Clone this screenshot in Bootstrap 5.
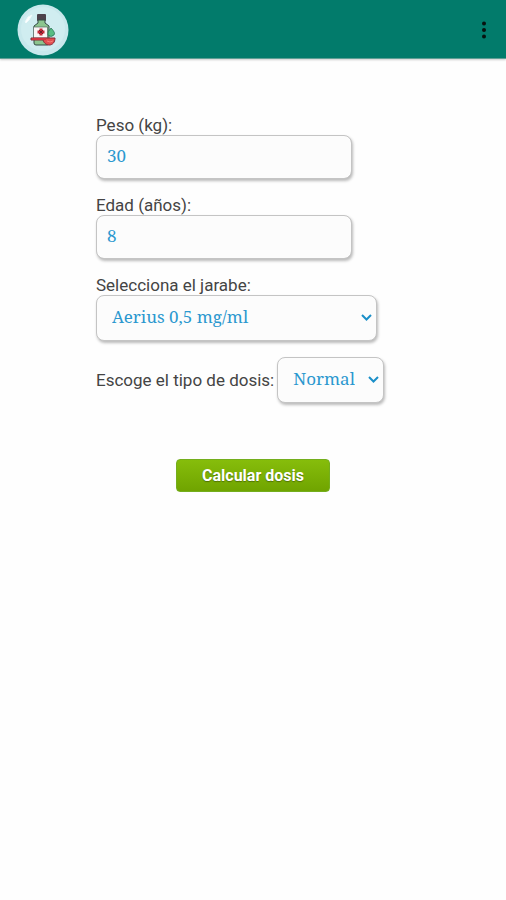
<!DOCTYPE html>
<html lang="es">
<head>
<meta charset="utf-8">
<meta name="viewport" content="width=device-width, initial-scale=1">
<title>Calcular dosis</title>
<link href="https://cdn.jsdelivr.net/npm/bootstrap@5.3.0/dist/css/bootstrap.min.css" rel="stylesheet">
<style>
body { font-family: Roboto, sans-serif; font-size: 17px; line-height: 20px; color: #444; background: #fefefe; }
.app-bar { background: #027b6b; border-bottom: 1px solid #5f9f95; box-shadow: 0 1px 2px #0003; padding: 4px 12px 2px 17px; }
.brand-logo { width: 52px; height: 52px; }
.menu-btn { width: 20px; line-height: 0; }
.dose-form { padding: 56px 24px 24px 96px; }
.dose-field { margin-bottom: 16px; }
.dose-control { font-family: "Noto Serif", "DejaVu Serif Condensed", "DejaVu Serif", serif; font-size: 17px; line-height: 22px; color: #2b98cf; background-color: #fcfcfc; border: 1px solid #c4c4c4; border-radius: 8px; box-shadow: 1px 2px 3px #0004; }
.dose-control:focus { color: #2b98cf; }
input.dose-control { width: 256px; max-width: 100%; height: 44px; padding: 8px 10px 12px; }
select.dose-control { height: 46px; padding: 10px 28px 12px 15px; background-position: right 4px top 16px; background-size: 11px 11px; background-image: url("data:image/svg+xml,%3csvg xmlns='http://www.w3.org/2000/svg' viewBox='0 0 11 11'%3e%3cpath fill='none' stroke='%231b8fc8' stroke-width='2' d='M1 3l4.500 4.500L10 3'/%3e%3c/svg%3e"); }
.syrup { width: 281px; max-width: 100%; }
.dose-type { width: 107px; }
.dose-row { gap: 3px; }
.calc-btn { width: 154px; height: 33px; padding: 0; font-size: 16px; font-weight: 700; color: #fff; background: linear-gradient(#86bd0b, #70a400); border: 1px solid #74ae1d; border-radius: 4px; text-shadow: 0 1px 1px #0005; }
.calc-btn:hover { color: #fff; background: #70a400; }
.calc-row { margin-top: 56px; margin-left: -72px; }
</style>
<script src="https://cdn.jsdelivr.net/npm/bootstrap@5.3.0/dist/js/bootstrap.bundle.min.js" defer></script>
</head>
<body>
<header class="app-bar d-flex align-items-center justify-content-between">
  <svg class="brand-logo" viewBox="0 0 52 52" role="img" aria-label="Jarabe">
    <circle cx="26" cy="26" r="25.500" fill="#c8e8ec"/>
    <circle cx="26" cy="25" r="22" fill="#d0edf0"/>
    <path d="M8 18l3-5 4-2-3 5-3 3z" fill="#fff" stroke="#effbfc"/>
    <rect x="20" y="10" width="9" height="7" rx="1" fill="#4c414b"/>
    <path d="M21 16h7v3l4 3v17q0 2-2 2H19q-2 0-2-2V22l4-3z" fill="#8cc58e" stroke="#334b45"/>
    <path d="M16.500 23h14v11h-14z" fill="#fbf5f5" stroke="#526760" stroke-width=".7"/>
    <path d="M24 24.500v7M20.500 28h7" stroke="#c52938" stroke-width="3"/>
    <path d="M22 26l4 4m0-4l-4 4" stroke="#70202d" stroke-width="1"/>
    <path d="M34 24q5 5 3 7-3 3-6 0-1-3 3-7z" fill="#57bd83" stroke="#236d50" stroke-width=".7"/>
    <path d="M14 34h24c0 9-10 9-12 2H14z" fill="#e34f50" stroke="#842a36"/>
    <path d="M15 35h14" stroke="#d13440" stroke-width="2"/>
    <path d="M30 37q3 2 6 0" fill="none" stroke="#f18179"/>
  </svg>
  <button type="button" class="menu-btn btn p-0 border-0" aria-label="Menú">
    <svg width="4" height="18" viewBox="0 0 4 18" fill="#07120f"><circle cx="2" cy="2.500" r="2"/><circle cx="2" cy="9" r="2"/><circle cx="2" cy="15.500" r="2"/></svg>
  </button>
</header>
<main>
  <form class="dose-form">
    <div class="dose-field">
      <label class="d-block" for="peso">Peso (kg):</label>
      <input class="dose-control form-control" id="peso" type="text" inputmode="decimal" value="30">
    </div>
    <div class="dose-field">
      <label class="d-block" for="edad">Edad (años):</label>
      <input class="dose-control form-control" id="edad" type="text" inputmode="numeric" value="8">
    </div>
    <div class="dose-field">
      <label class="d-block" for="jarabe">Selecciona el jarabe:</label>
      <select class="dose-control form-select syrup" id="jarabe"><option>Aerius 0,5 mg/ml</option></select>
    </div>
    <div class="dose-row d-flex align-items-center">
      <label for="tipo">Escoge el tipo de dosis:</label>
      <select class="dose-control form-select dose-type" id="tipo"><option>Normal</option></select>
    </div>
    <div class="calc-row text-center">
      <button type="button" class="calc-btn btn">Calcular dosis</button>
    </div>
  </form>
</main>
</body>
</html>
